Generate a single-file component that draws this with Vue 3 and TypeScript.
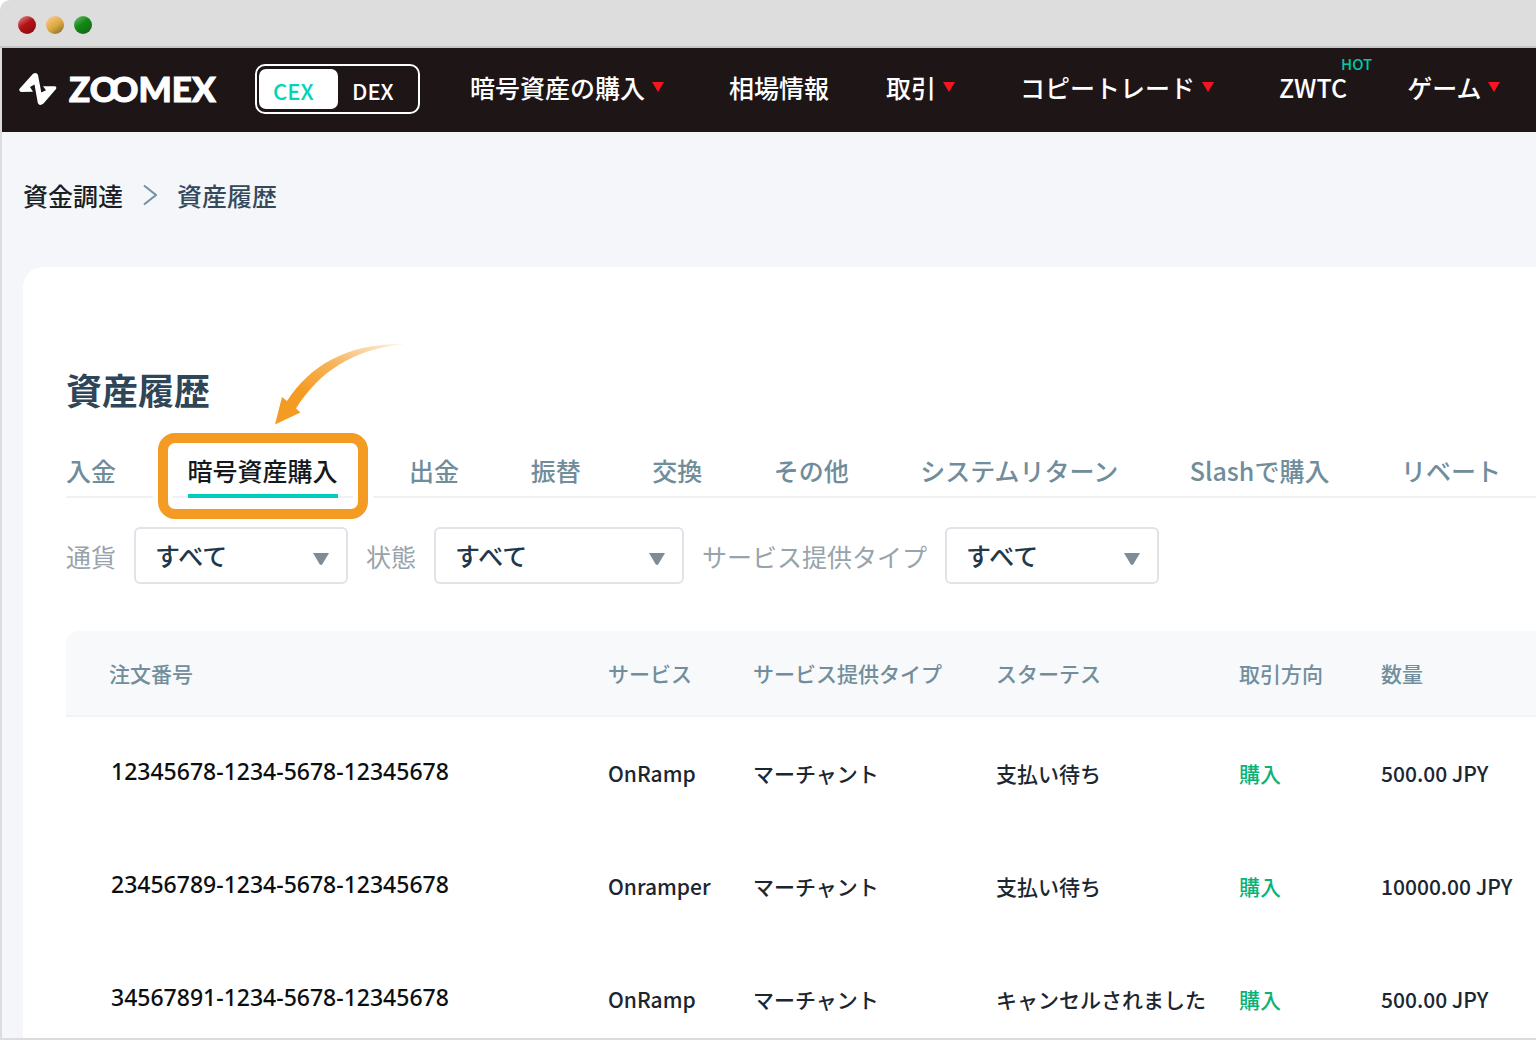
<script setup lang="ts">
import { ref } from 'vue'

interface NavItem {
  label: string
  menu?: boolean
  badge?: string
}

interface Filter {
  id: string
  label: string
  wide?: boolean
}

interface Order {
  id: string
  service: string
  provider: string
  status: string
  side: string
  amount: string
}

const navItems: NavItem[] = [
  { label: '暗号資産の購入', menu: true },
  { label: '相場情報' },
  { label: '取引', menu: true },
  { label: 'コピートレード', menu: true },
  { label: 'ZWTC', badge: 'HOT' },
  { label: 'ゲーム', menu: true },
]

const tabs: string[] = [
  '入金',
  '暗号資産購入',
  '出金',
  '振替',
  '交換',
  'その他',
  'システムリターン',
  'Slashで購入',
  'リベート',
]
const activeTab = ref('暗号資産購入')

const filters: Filter[] = [
  { id: 'currency', label: '通貨' },
  { id: 'state', label: '状態', wide: true },
  { id: 'provider', label: 'サービス提供タイプ' },
]

const columns: string[] = ['注文番号', 'サービス', 'サービス提供タイプ', 'スターテス', '取引方向', '数量']

const orders: Order[] = [
  { id: '12345678-1234-5678-12345678', service: 'OnRamp', provider: 'マーチャント', status: '支払い待ち', side: '購入', amount: '500.00 JPY' },
  { id: '23456789-1234-5678-12345678', service: 'Onramper', provider: 'マーチャント', status: '支払い待ち', side: '購入', amount: '10000.00 JPY' },
  { id: '34567891-1234-5678-12345678', service: 'OnRamp', provider: 'マーチャント', status: 'キャンセルされました', side: '購入', amount: '500.00 JPY' },
]
</script>

<template>
  <div class="window">
    <div class="titlebar">
      <span class="light red"></span>
      <span class="light yellow"></span>
      <span class="light green"></span>
    </div>

    <div class="page">
      <header class="topbar">
        <a class="brand" href="#">
          <svg class="brand-mark" viewBox="0 0 38 34" aria-hidden="true">
            <path
              d="M0.8 16.5 L13.8 2 Q17.500 -0.300 19 3 L22.300 20.500 L27 18.200 L24 14.300 L36 14.300 Q38.200 15 36.800 17.200 L24.500 31.500 Q20.500 34.500 18.800 31 L15.500 12.500 L11 15 L14 19.800 L2 20 Q-0.800 19 0.800 16.500 Z"
              fill="#fff"
            />
          </svg>
          <span class="brand-name">ZO<span class="linked">O</span>MEX</span>
        </a>

        <div class="exchange">
          <button type="button" class="exchange-option selected">CEX</button>
          <button type="button" class="exchange-option">DEX</button>
        </div>

        <nav class="nav">
          <a
            v-for="item in navItems"
            :key="item.label"
            href="#"
            class="nav-link"
            :class="{ 'has-menu': item.menu, 'has-badge': item.badge }"
          >
            {{ item.label }}
            <svg v-if="item.menu" class="nav-caret" viewBox="0 0 12 10" aria-hidden="true">
              <path d="M0 0 H12 L6 10 Z" fill="#f5151f" />
            </svg>
            <span v-if="item.badge" class="nav-badge">{{ item.badge }}</span>
          </a>
        </nav>
      </header>

      <nav class="breadcrumb">
        <a href="#" class="crumb home">資金調達</a>
        <svg class="crumb-sep" viewBox="0 0 14 22" aria-hidden="true">
          <path d="M1 1.500 L13 11 L1 20.500" fill="none" stroke="#72909f" stroke-width="2" />
        </svg>
        <span class="crumb">資産履歴</span>
      </nav>

      <main class="card">
        <h1 class="title">資産履歴</h1>

        <div class="tabs">
          <button
            v-for="tab in tabs"
            :key="tab"
            type="button"
            class="tab"
            :class="{ active: tab === activeTab }"
            @click="activeTab = tab"
          >
            {{ tab }}
            <template v-if="tab === activeTab">
              <span class="highlight"></span>
              <svg class="pointer" viewBox="0 0 132 82" aria-hidden="true">
                <defs>
                  <linearGradient id="pointer-fade" x1="0" y1="1" x2="1" y2="0">
                    <stop offset="0.300" stop-color="#f49b23" />
                    <stop offset="0.600" stop-color="#f49b23" stop-opacity="0.750" />
                    <stop offset="1" stop-color="#f49b23" stop-opacity="0.100" />
                  </linearGradient>
                </defs>
                <path
                  d="M0 81.500 L7 54 L12 58 C35 23 71 0 130 1 C78 6 44 29 21 65.500 L25.500 69.500 Z"
                  fill="url(#pointer-fade)"
                />
              </svg>
            </template>
          </button>
        </div>

        <form class="filters">
          <div v-for="filter in filters" :key="filter.id" class="filter">
            <label :for="filter.id">{{ filter.label }}</label>
            <div class="select" :class="{ wide: filter.wide }">
              <select :id="filter.id">
                <option>すべて</option>
              </select>
              <svg class="select-caret" viewBox="0 0 16 12" aria-hidden="true">
                <path d="M0 0 H16 L9.500 11 Q8 13 6.500 11 Z" fill="#7e8c98" />
              </svg>
            </div>
          </div>
        </form>

        <table class="orders">
          <colgroup>
            <col class="col-id" />
            <col class="col-service" />
            <col class="col-text" />
            <col class="col-text" />
            <col class="col-side" />
            <col />
          </colgroup>
          <thead>
            <tr>
              <th v-for="column in columns" :key="column" scope="col">{{ column }}</th>
            </tr>
          </thead>
          <tbody>
            <tr v-for="order in orders" :key="order.id">
              <td class="order-id">{{ order.id }}</td>
              <td>{{ order.service }}</td>
              <td>{{ order.provider }}</td>
              <td>{{ order.status }}</td>
              <td class="side">{{ order.side }}</td>
              <td>{{ order.amount }}</td>
            </tr>
          </tbody>
        </table>
      </main>
    </div>
  </div>
</template>

<style>
body {
  margin: 0;
  background: #fff;
}
</style>

<style scoped>
.window,
.window * {
  box-sizing: border-box;
}

.window {
  display: flex;
  flex-direction: column;
  height: 100vh;
  overflow: hidden;
  border-bottom: 2px solid #dcdcdc;
  border-top-left-radius: 10px;
  font-family: "Noto Sans CJK JP", "Noto Sans", sans-serif;
  font-weight: 500;
  white-space: nowrap;
}

.window button,
.window select {
  font: inherit;
}

.window a {
  text-decoration: none;
}

.titlebar {
  display: flex;
  flex: none;
  align-items: center;
  gap: 10px;
  height: 48px;
  padding: 4px 18px 0;
  background: #dddddd;
  border-bottom: 2px solid #c5c7c5;
}

.light {
  width: 18px;
  height: 18px;
  border-radius: 50%;
}

.red {
  background: linear-gradient(145deg, #dd8a8a 5%, #b31217 45%, #8a0d10 90%);
}

.yellow {
  background: linear-gradient(145deg, #fbc785 10%, #d9a83c 55%, #8c7030 90%);
}

.green {
  background: linear-gradient(145deg, #6db96d 5%, #0f8a12 45%, #1d651d 90%);
}

.page {
  flex: 1;
  min-height: 0;
  overflow: hidden;
  background: #f4f6fa;
  border-left: 2px solid #dcdcdc;
}

.topbar {
  display: flex;
  align-items: center;
  height: 84px;
  padding: 0 36px 2px 17px;
  background: #1e1517;
  color: #fff;
}

.brand {
  display: flex;
  flex: none;
  align-items: center;
  gap: 12px;
  width: 236px;
  color: #fff;
}

.brand-mark {
  width: 38px;
  height: 34px;
}

.brand-name {
  padding-bottom: 2px;
  font-family: Lato, sans-serif;
  font-size: 35px;
  font-weight: 900;
  line-height: 40px;
  -webkit-text-stroke: 1px #fff;
}

/* The two Os of the wordmark interlock. */
.linked {
  margin-left: -8px;
}

.exchange {
  display: flex;
  flex: none;
  width: 165px;
  height: 50px;
  margin-right: 50px;
  padding: 3px 2px;
  border: 2px solid #fff;
  border-radius: 10px;
}

.exchange-option {
  padding: 2px 14px 0;
  border: 0;
  border-radius: 7px;
  background: none;
  color: #fff;
  line-height: 36px;
}

.exchange .exchange-option {
  font-size: 22px;
}

.exchange-option.selected {
  width: 79px;
  background: #fff;
  color: #00d5b8;
  text-align: left;
}

.nav {
  display: flex;
  gap: 57px;
  padding-bottom: 4px;
  font-size: 25px;
  line-height: 36px;
}

.nav-link {
  position: relative;
  display: flex;
  align-items: center;
  gap: 7px;
  color: #fff;
}

.has-menu {
  margin-right: 8px;
}

.has-badge {
  padding-right: 3px;
}

.nav-caret {
  width: 12px;
  height: 10px;
}

.nav-badge {
  position: absolute;
  top: -14px;
  left: 62px;
  color: #00c8a8;
  font-size: 15px;
  line-height: 18px;
}

.breadcrumb {
  display: flex;
  align-items: center;
  gap: 20px;
  padding: 45px 21px 54px;
  font-size: 25px;
  line-height: 36px;
}

.crumb {
  color: #34495a;
}

.crumb.home {
  color: #1b1f24;
}

.crumb-sep {
  width: 14px;
  height: 22px;
}

.card {
  margin-left: 21px;
  padding: 96px 0 0 43px;
  border-top-left-radius: 20px;
  background: #fff;
}

.title {
  margin: 0;
  color: #2f4558;
  font-size: 36px;
  font-weight: 700;
  line-height: 52px;
}

.tabs {
  display: flex;
  justify-content: space-between;
  margin-top: 37px;
  padding-right: 35px;
  box-shadow: inset 0 -2px #eff1f2;
  font-size: 25px;
}

.tab {
  position: relative;
  padding: 0 0 6px;
  border: 0;
  border-bottom: 4px solid transparent;
  background: none;
  color: #708d9b;
  line-height: 36px;
}

.tab.active {
  border-bottom-color: #00cdbb;
  color: #15191d;
}

.highlight {
  position: absolute;
  top: -19px;
  right: -30px;
  bottom: -25px;
  left: -30px;
  border: 10px solid #f49b23;
  border-radius: 17px;
  box-shadow: 0 0 0 5px #fff, inset 0 0 0 5px #fff;
}

.pointer {
  position: absolute;
  top: -109px;
  left: 87px;
  width: 132px;
  height: 82px;
}

.filters {
  display: flex;
  gap: 18px;
  margin-top: 29px;
  color: #98a3ab;
  font-size: 25px;
  font-weight: 400;
}

.filter {
  display: flex;
  align-items: center;
  gap: 18px;
}

.select {
  position: relative;
  width: 214px;
}

.select.wide {
  width: 250px;
}

.select select {
  width: 100%;
  height: 57px;
  padding: 0 19px 2px;
  appearance: none;
  border: 2px solid #e0e4e8;
  border-radius: 6px;
  background: #fff;
  color: #22384a;
  font-weight: 500;
}

.select-caret {
  position: absolute;
  top: 26px;
  right: 19px;
  width: 16px;
  height: 12px;
  pointer-events: none;
}

.orders {
  width: 100%;
  margin-top: 47px;
  border-spacing: 0;
  table-layout: fixed;
  font-size: 21px;
  color: #1b2630;
}

.col-id {
  width: 542px;
}

.col-service {
  width: 145px;
}

.col-text {
  width: 243px;
}

.col-side {
  width: 142px;
}

.orders th {
  height: 86px;
  padding: 0;
  border-bottom: 2px solid #f1f4f6;
  background: #f7f9fb;
  color: #728e9c;
  font-weight: 500;
  text-align: left;
}

.orders th:first-child {
  padding-left: 43px;
  border-top-left-radius: 12px;
}

.orders td {
  height: 113px;
  padding: 0 0 2px;
}

.orders td.order-id {
  padding: 0 0 5px 45px;
  color: #0c0f12;
  font-family: "Noto Sans", sans-serif;
  font-size: 23px;
}

.orders td.side {
  color: #0bb377;
}
</style>
